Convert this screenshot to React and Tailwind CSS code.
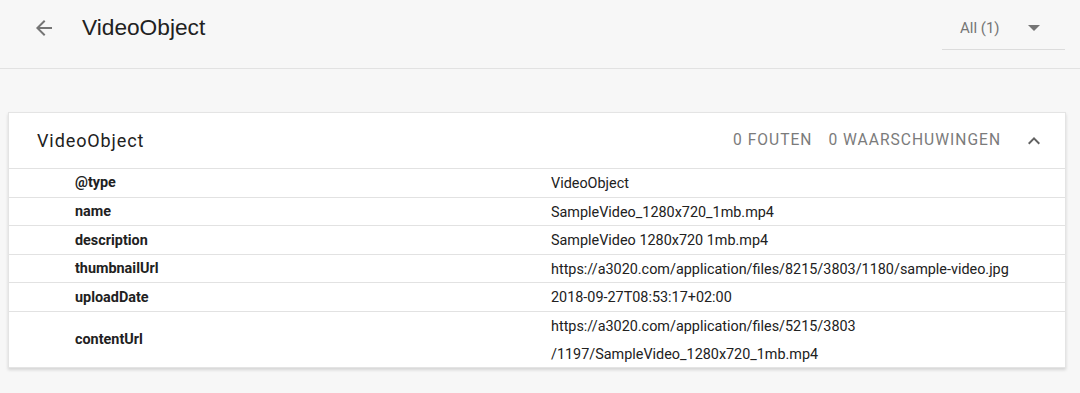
import React from "react";

const rows = [
  { name: "@type", value: ["VideoObject"] },
  { name: "name", value: ["SampleVideo_1280x720_1mb.mp4"] },
  { name: "description", value: ["SampleVideo 1280x720 1mb.mp4"] },
  {
    name: "thumbnailUrl",
    value: ["https://a3020.com/application/files/8215/3803/1180/sample-video.jpg"],
  },
  { name: "uploadDate", value: ["2018-09-27T08:53:17+02:00"] },
  {
    name: "contentUrl",
    value: [
      "https://a3020.com/application/files/5215/3803",
      "/1197/SampleVideo_1280x720_1mb.mp4",
    ],
  },
];

export default function App() {
  return (
    <div className="w-full h-[393px] bg-[#f7f7f7] font-['Roboto',sans-serif] text-[#212121] overflow-hidden">
      {/* Top bar */}
      <header className="h-[69px] pb-[12px] border-b border-[#e2e2e2] flex items-center">
        <button className="ml-[32px] w-[24px] h-[24px] flex items-center justify-center text-[#757575]">
          <svg width="24" height="24" viewBox="0 0 24 24" fill="currentColor">
            <path d="M20 11H7.83l5.59-5.59L12 4l-8 8 8 8 1.41-1.41L7.83 13H20v-2z" />
          </svg>
        </button>
        <h1 className="ml-[26px] text-[22.7px] font-['Liberation_Sans',sans-serif] text-[#212121] -mt-[2px]">
          VideoObject
        </h1>
        <div className="ml-auto mr-[15px] w-[123px] h-[40px] mt-[4px] border-b border-[#dcdcdc] flex items-center pl-[18px] pr-[25px] text-[#757575]">
          <span className="text-[15px] -mt-[3px]">All (1)</span>
          <svg className="ml-auto -mt-[3px]" width="12" height="6" viewBox="0 0 12 6" fill="currentColor">
            <path d="M0 0h12L6 6z" />
          </svg>
        </div>
      </header>

      {/* Card */}
      <section className="mt-[43px] ml-[8px] mr-[14px] bg-white border border-[#e4e4e4] shadow-[0_2px_3px_rgba(0,0,0,0.14)]">
        <div className="h-[56px] flex items-center pl-[28px] pr-[19px] border-b border-[#e2e2e2]">
          <h2 className="text-[18px] tracking-[0.9px] text-[#212121]">VideoObject</h2>
          <div className="ml-auto flex items-center text-[15.6px] tracking-[1px] text-[#7b7b7b]">
            <span>0 FOUTEN</span>
            <span className="ml-[16px]">0 WAARSCHUWINGEN</span>
            <svg className="ml-[21px]" width="24" height="24" viewBox="0 0 24 24" fill="#616161">
              <path d="M12 8l-6 6 1.41 1.41L12 10.83l4.59 4.58L18 14z" />
            </svg>
          </div>
        </div>
        {rows.map((r, i) => (
          <div
            key={r.name}
            className={
              "flex items-center pt-[1px] text-[14.4px] " +
              (i < rows.length - 1 ? "border-b border-[#e2e2e2]" : "")
            }
          >
            <div className="w-[542px] shrink-0 pl-[66px] font-bold">{r.name}</div>
            <div className="leading-[27.6px] -mb-[1px]">
              {r.value.map((v) => (
                <div key={v}>{v}</div>
              ))}
            </div>
          </div>
        ))}
      </section>
    </div>
  );
}
